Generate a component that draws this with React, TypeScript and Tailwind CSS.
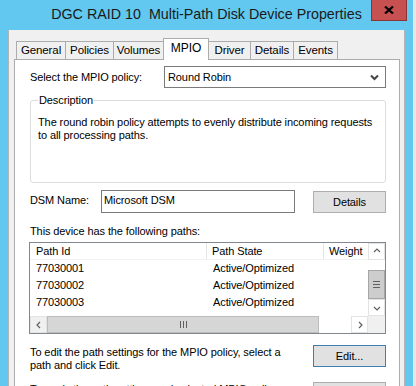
import React from 'react';

const tabs = [
  { label: 'General', w: 'w-[49px]' },
  { label: 'Policies', w: 'w-[48px]' },
  { label: 'Volumes', w: 'w-[50px]' },
  { label: 'MPIO', w: 'w-[46px]', active: true },
  { label: 'Driver', w: 'w-[41px]' },
  { label: 'Details', w: 'w-[43px]' },
  { label: 'Events', w: 'w-[45px]' },
];

const paths = ['77030001', '77030002', '77030003'];

const Chevron: React.FC<{ dir: 'up' | 'down' | 'left' | 'right' }> = ({ dir }) => {
  const pts = {
    up: '2,6 5,3 8,6',
    down: '2,4 5,7 8,4',
    left: '6,2 3,5 6,8',
    right: '4,2 7,5 4,8',
  }[dir];
  return (
    <svg width="10" height="10" viewBox="0 0 10 10">
      <polyline points={pts} fill="none" stroke="#606060" strokeWidth="1.2" />
    </svg>
  );
};

const App: React.FC = () => {
  return (
    <div className="w-[416px] h-[386px] overflow-hidden flex bg-[#62c8ef] font-['Liberation_Sans',Arial,sans-serif] text-[11px] tracking-[-0.1px] text-black">
      {/* window */}
      <div className="w-[413px] flex flex-col">
        {/* title bar */}
        <div className="h-[30px] shrink-0 relative flex items-center justify-center">
          <span className="text-[14.3px] tracking-normal text-[#1a1a1a]">DGC RAID 10&nbsp; Multi-Path Disk Device Properties</span>
          <div className="absolute right-[6px] top-0 w-[36px] h-[21px] bg-[#c75050] border border-t-0 border-[#8a3434] flex items-center justify-center">
            <svg width="10" height="8" viewBox="0 0 10 8">
              <path d="M1 0.5 L9 7.5 M9 0.5 L1 7.5" stroke="#000" strokeWidth="2.2" />
            </svg>
          </div>
        </div>

        {/* client area */}
        <div className="mx-[8px] flex-1 bg-[#f0f0f0] border-l border-r border-[#b4b4b4] pl-[5px] pr-[4px] flex flex-col">
          {/* tabs */}
          <div className="flex items-end ml-[2px] pt-[8px] -mb-px">
            {tabs.map((t, i) =>
              t.active ? (
                <div
                  key={t.label}
                  className={`${t.w} h-[22px] relative z-10 bg-white border border-b-0 border-[#acacac] flex items-center justify-center pb-[4px] text-[12px]`}
                >
                  {t.label}
                </div>
              ) : (
                <div
                  key={t.label}
                  className={`${t.w} h-[19px] bg-[#f0f0f0] border-t border-b border-l border-[#acacac] flex items-center justify-center text-[11.5px] ${i === tabs.length - 1 ? 'border-r' : ''} ${tabs[i - 1]?.active ? 'border-l-0' : ''}`}
                >
                  {t.label}
                </div>
              )
            )}
          </div>

          {/* tab page */}
          <div className="flex-1 bg-white border border-[#acacac] pl-[15px] pr-[13px] flex flex-col">
            {/* policy */}
            <div className="mt-[6px] flex items-center h-[22px]">
              <span className="w-[134px]">Select the MPIO policy:</span>
              <div className="flex-1 h-[22px] border border-[#7a7a7a] flex items-center justify-between pl-[3px] pr-[6px]">
                <span>Round Robin</span>
                <svg width="9" height="7" viewBox="0 0 9 7">
                  <polyline points="1,1.5 4.5,5 8,1.5" fill="none" stroke="#444" strokeWidth="2" />
                </svg>
              </div>
            </div>

            {/* description group */}
            <fieldset className="mt-[5px] h-[90px] border border-[#dcdcdc] rounded-[3px] px-[7px]">
              <legend className="px-[1px] leading-[14px]">Description</legend>
              <p className="mt-[9px] leading-[13px] whitespace-nowrap">
                The round robin policy attempts to evenly distribute incoming requests
                <br />
                to all processing paths.
              </p>
            </fieldset>

            {/* DSM */}
            <div className="mt-[7px] flex items-start h-[23px]">
              <span className="w-[71px] leading-[20px]">DSM Name:</span>
              <div className="w-[194px] h-[23px] border border-[#7a7a7a] pl-[2px] leading-[18px]">Microsoft DSM</div>
              <div className="ml-auto mt-px w-[73px] h-[22px] bg-[#e1e1e1] border border-[#adadad] flex items-center justify-center">
                Details
              </div>
            </div>

            <p className="mt-[12px] leading-[13px]">This device has the following paths:</p>

            {/* paths list */}
            <div className="mt-[4px] -ml-px w-[357px] h-[92px] shrink-0 border border-[#828790] flex flex-col">
              <div className="flex flex-1 min-h-0">
                <div className="flex-1 flex flex-col">
                  <div className="flex h-[17px] border-b border-[#f2f2f2]">
                    <div className="w-[177px] pl-[6px] border-r border-[#e5e5e5] leading-[16px]">Path Id</div>
                    <div className="w-[117px] pl-[5px] border-r border-[#e5e5e5] leading-[16px]">Path State</div>
                    <div className="flex-1 pl-[5px] leading-[16px] overflow-hidden whitespace-nowrap">Weight</div>
                  </div>
                  {paths.map((p) => (
                    <div key={p} className="flex h-[17px] leading-[17px]">
                      <div className="w-[177px] pl-[6px]">{p}</div>
                      <div className="w-[117px] pl-[6px]">Active/Optimized</div>
                    </div>
                  ))}
                </div>
                {/* vertical scrollbar */}
                <div className="w-[17px] bg-[#f0f0f0] flex flex-col">
                  <div className="h-[17px] flex items-center justify-center border border-[#e3e3e3] bg-white">
                    <Chevron dir="up" />
                  </div>
                  <div className="h-[10px] bg-white" />
                  <div className="h-[30px] bg-[#cdcdcd] border border-[#a6a6a6] flex flex-col items-center justify-center gap-[2px]">
                    <div className="w-[7px] h-px bg-[#606060]" />
                    <div className="w-[7px] h-px bg-[#606060]" />
                    <div className="w-[7px] h-px bg-[#606060]" />
                  </div>
                  <div className="flex-1 bg-white" />
                  <div className="h-[17px] flex items-center justify-center border border-[#e3e3e3] bg-white">
                    <Chevron dir="down" />
                  </div>
                </div>
              </div>
              {/* horizontal scrollbar */}
              <div className="h-[17px] flex shrink-0">
                <div className="w-[17px] flex items-center justify-center bg-[#f0f0f0] border border-[#e3e3e3]">
                  <Chevron dir="left" />
                </div>
                <div className="w-[272px] bg-[#d6d6d6] border border-[#bcbcbc] flex items-center justify-center gap-[2px]">
                  <div className="w-px h-[7px] bg-[#606060]" />
                  <div className="w-px h-[7px] bg-[#606060]" />
                  <div className="w-px h-[7px] bg-[#606060]" />
                </div>
                <div className="flex-1 bg-white" />
                <div className="w-[17px] flex items-center justify-center bg-white border border-[#e3e3e3]">
                  <Chevron dir="right" />
                </div>
                <div className="w-[17px] bg-[#f0f0f0]" />
              </div>
            </div>

            {/* edit */}
            <div className="mt-[11px] flex items-start">
              <p className="mt-[1px] leading-[13px]">
                To edit the path settings for the MPIO policy, select a
                <br />
                path and click Edit.
              </p>
              <div className="ml-auto w-[73px] h-[22px] bg-[#e1e1e1] border border-[#3c7fb1] flex items-center justify-center">
                Edit...
              </div>
            </div>

            {/* apply */}
            <div className="mt-[10px] flex items-start">
              <p className="mt-[1px] leading-[13px]">
                To apply the path settings and selected MPIO policy,
                <br />
                click Apply.
              </p>
              <div className="ml-auto w-[73px] h-[22px] bg-[#e1e1e1] border border-[#adadad] flex items-center justify-center">
                Apply
              </div>
            </div>
          </div>
        </div>
      </div>
      {/* desktop sliver */}
      <div className="w-[3px] bg-[#e6e6e6]" />
    </div>
  );
};

export default App;
